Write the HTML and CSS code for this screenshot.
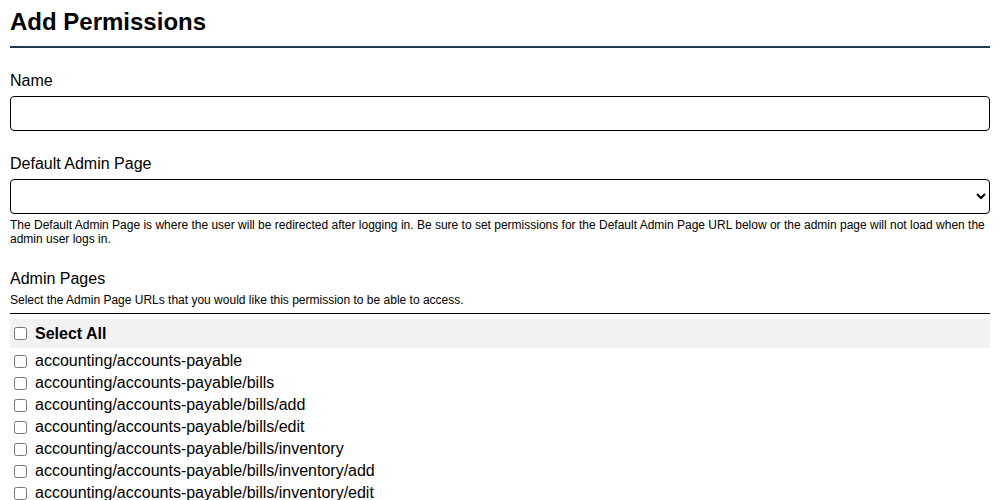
FILE: index.html
```html
<!DOCTYPE html>
<html lang="en">
<head>
    <meta charset="UTF-8">
    <meta name="viewport" content="width=device-width, initial-scale=1.0">
    <title>Add Permissions</title>
    <link rel="stylesheet" href="styles.css">
</head>
<body>
    <div class="page">
        <h1 class="page-title">Add Permissions</h1>

        <form class="perm-form">
            <div class="field">
                <label class="field-label" for="name">Name</label>
                <input class="field-input" type="text" id="name">
            </div>

            <div class="field">
                <label class="field-label" for="default-page">Default Admin Page</label>
                <select class="field-input" id="default-page">
                    <option value=""></option>
                </select>
                <p class="field-help">The Default Admin Page is where the user will be redirected after logging in. Be sure to set permissions for the Default Admin Page URL below or the admin page will not load when the admin user logs in.</p>
            </div>

            <div class="field pages">
                <div class="field-label">Admin Pages</div>
                <p class="pages-help">Select the Admin Page URLs that you would like this permission to be able to access.</p>

                <div class="page-list">
                    <label class="page-row select-all"><input type="checkbox"> Select All</label>
                    <label class="page-row"><input type="checkbox"> accounting/accounts-payable</label>
                    <label class="page-row"><input type="checkbox"> accounting/accounts-payable/bills</label>
                    <label class="page-row"><input type="checkbox"> accounting/accounts-payable/bills/add</label>
                    <label class="page-row"><input type="checkbox"> accounting/accounts-payable/bills/edit</label>
                    <label class="page-row"><input type="checkbox"> accounting/accounts-payable/bills/inventory</label>
                    <label class="page-row"><input type="checkbox"> accounting/accounts-payable/bills/inventory/add</label>
                    <label class="page-row"><input type="checkbox"> accounting/accounts-payable/bills/inventory/edit</label>
                </div>
            </div>
        </form>
    </div>
</body>
</html>
```

FILE: styles.css
```css
body {
    margin: 0;
    font-family: "Liberation Sans", Arial, sans-serif;
    color: #000;
    background: #fff;
}
.page {
    padding: 8px 10px;
}
.page-title {
    margin: 0;
    font-size: 24px;
    font-weight: bold;
    padding-bottom: 10px;
    border-bottom: 2px solid #1d3a50;
}
.perm-form {
    margin-top: 24px;
}
.field {
    margin-bottom: 24px;
}
.field-label {
    display: block;
    font-size: 16px;
    margin-bottom: 6px;
}
.field-input {
    display: block;
    box-sizing: border-box;
    width: 100%;
    height: 35px;
    border: 1px solid #000;
    border-radius: 4px;
    background: #fff;
    font-size: 16px;
    font-family: inherit;
}
.field-help {
    margin: 4px 0 0;
    font-size: 12px;
}
.pages .field-label {
    margin-bottom: 5px;
}
.pages-help {
    margin: 0;
    font-size: 12px;
    padding-bottom: 6px;
    border-bottom: 1px solid #000;
}
.page-list {
    margin-top: 5px;
}
.page-row {
    display: flex;
    align-items: center;
    height: 22px;
    font-size: 16px;
}
.page-row input {
    margin: 0 8px 0 4px;
    width: 13px;
    height: 13px;
}
.select-all {
    height: 29px;
    margin-bottom: 2px;
    font-weight: bold;
    background: #f2f2f2;
}
```
